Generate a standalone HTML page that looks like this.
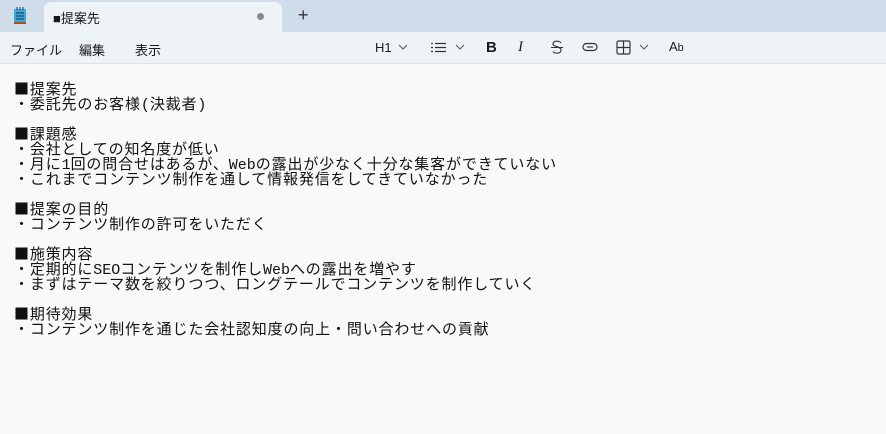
<!DOCTYPE html>
<html><head><meta charset="utf-8"><style>
*{margin:0;padding:0;box-sizing:border-box}
body{width:886px;height:434px;overflow:hidden;background:#f9f9f9;font-family:"Liberation Sans","Noto Sans CJK JP",sans-serif;position:relative}
.title{position:absolute;left:0;top:0;width:886px;height:32px;background:#cfdcea}
.tab{position:absolute;left:44px;top:2px;width:238px;height:30px;background:#eef3f8;border-radius:7px 7px 0 0}
.menu{position:absolute;left:0;top:32px;width:886px;height:32px;background:#eef3f8;border-bottom:1px solid #dde2e8}
.t{position:absolute;font-size:13px;color:#1a1a1a;white-space:nowrap}
.doc{position:absolute;left:14px;top:81px;font-family:"Noto Sans CJK JP",sans-serif;font-size:15px;letter-spacing:0.85px;color:#111;white-space:pre}
.doc div{height:15px;line-height:15px;overflow:visible}
.h{font-family:"Liberation Mono",monospace;letter-spacing:0;line-height:15px}
svg{position:absolute}
</style></head><body>
<div class="title"></div>
<div class="tab"></div>
<svg style="left:13px;top:7px" width="14" height="18" viewBox="0 0 14 18"><rect x="1" y="2" width="12" height="14" rx="1" fill="#3ba6d8"/><rect x="1" y="15" width="12" height="2" fill="#b24a1c"/><path d="M3 6h8M3 9h8M3 12h8" stroke="#0d3a5a" stroke-width="1"/><path d="M4 0v3M7 0v3M10 0v3" stroke="#2a3a4a"/></svg>
<div class="t" style="left:53px;top:8px;font-size:13px">■提案先</div>
<div style="position:absolute;left:257px;top:13px;width:7px;height:7px;border-radius:50%;background:#8a8a8a"></div>
<div class="t" style="left:298px;top:5px;font-size:18px;font-weight:300;color:#333">+</div>
<div class="menu"></div>
<div class="t" style="left:10px;top:40px">ファイル</div>
<div class="t" style="left:79px;top:40px">編集</div>
<div class="t" style="left:135px;top:40px">表示</div>
<div class="t" style="left:375px;top:40px;font-size:13px">H1</div>
<svg style="left:398px;top:44px" width="10" height="6"><path d="M1 1l4 4 4-4" stroke="#555" fill="none"/></svg>
<svg style="left:431px;top:42px" width="16" height="11"><path d="M0 1.5h2M0 5.5h2M0 9.5h2M4 1.5h11M4 5.5h11M4 9.5h11" stroke="#333" stroke-width="1.2"/></svg>
<svg style="left:455px;top:44px" width="10" height="6"><path d="M1 1l4 4 4-4" stroke="#555" fill="none"/></svg>
<div class="t" style="left:486px;top:39px;font-size:15px;font-weight:bold">B</div>
<div class="t" style="left:518px;top:39px;font-size:15px;font-style:italic;font-family:'Liberation Serif',serif">I</div>
<svg style="left:550px;top:40px" width="14" height="15"><path d="M11 3C10 1 4 0 3 3.5S11 6 11 10 4 14 3 11.5M1 7.5h12" stroke="#333" fill="none" stroke-width="1.1"/></svg>
<svg style="left:582px;top:42px" width="16" height="10"><rect x="1" y="1.5" width="14" height="7" rx="3.5" fill="none" stroke="#333" stroke-width="1.2"/><path d="M5 5h6" stroke="#333" stroke-width="1.2"/></svg>
<svg style="left:616px;top:40px" width="15" height="15"><rect x="1" y="1" width="13" height="13" rx="1.5" fill="none" stroke="#333" stroke-width="1.2"/><path d="M7.5 1v13M1 7.5h13" stroke="#333" stroke-width="1.2"/></svg>
<svg style="left:639px;top:44px" width="10" height="6"><path d="M1 1l4 4 4-4" stroke="#555" fill="none"/></svg>
<div class="t" style="left:669px;top:39px;font-size:13px">A<span style="font-size:11px">b</span></div>
<div class="doc"><div>■提案先</div><div>・委託先のお客様<span class="h">(</span>決裁者<span class="h">)</span></div><div></div><div>■課題感</div><div>・会社としての知名度が低い</div><div>・月に<span class="h">1</span>回の問合せはあるが、<span class="h">Web</span>の露出が少なく十分な集客ができていない</div><div>・これまでコンテンツ制作を通して情報発信をしてきていなかった</div><div></div><div>■提案の目的</div><div>・コンテンツ制作の許可をいただく</div><div></div><div>■施策内容</div><div>・定期的に<span class="h">SEO</span>コンテンツを制作し<span class="h">Web</span>への露出を増やす</div><div>・まずはテーマ数を絞りつつ、ロングテールでコンテンツを制作していく</div><div></div><div>■期待効果</div><div>・コンテンツ制作を通じた会社認知度の向上・問い合わせへの貢献</div></div>
</body></html>
